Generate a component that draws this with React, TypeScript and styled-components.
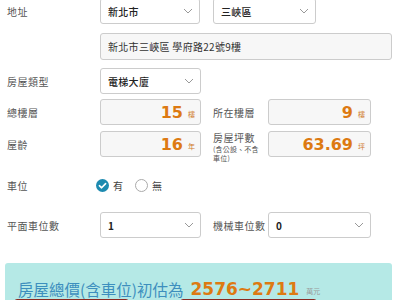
import React from "react";
import styled, { createGlobalStyle } from "styled-components";

const GlobalStyle = createGlobalStyle`
  html, body {
    margin: 0;
    background: #fff;
    font-family: "Noto Sans CJK TC", "Noto Sans", sans-serif;
    overflow: hidden;
  }
`;

const Chevron = () => (
  <svg width="10" height="6" viewBox="0 0 10 6">
    <path d="M1 1 L5 5 L9 1" fill="none" stroke="#999" strokeWidth="1" />
  </svg>
);

const Check = () => (
  <svg width="13" height="13" viewBox="0 0 13 13">
    <circle cx="6.5" cy="6.5" r="6.5" fill="#1d8ab0" />
    <path d="M3.4 6.7 L5.6 8.8 L9.6 4.6" fill="none" stroke="#fff" strokeWidth="1.6" strokeLinecap="round" strokeLinejoin="round" />
  </svg>
);

export default function App() {
  return (
    <>
      <GlobalStyle />
      <Page>
        <Row $mt={-2}>
          <Label>地址</Label>
          <Select $w={100}>
            新北市
            <Chevron />
          </Select>
          <Gap $w={13} />
          <Select $w={103}>
            三峽區
            <Chevron />
          </Select>
        </Row>
        <Row $mt={9}>
          <Label />
          <TextBox $w={292}>新北市三峽區 學府路22號9樓</TextBox>
        </Row>
        <Row $mt={9}>
          <Label>房屋類型</Label>
          <Select $w={101}>
            電梯大廈
            <Chevron />
          </Select>
        </Row>
        <Row $mt={5}>
          <Label>總樓層</Label>
          <ValueBox $w={101}>
            <Num>15</Num>
            <Unit>樓</Unit>
          </ValueBox>
          <SubLabel>所在樓層</SubLabel>
          <ValueBox $w={103}>
            <Num>9</Num>
            <Unit>樓</Unit>
          </ValueBox>
        </Row>
        <Row $mt={6}>
          <Label>屋齡</Label>
          <ValueBox $w={101}>
            <Num>16</Num>
            <Unit>年</Unit>
          </ValueBox>
          <SubLabel $top>
            房屋坪數
            <Note>(含公設、不含車位)</Note>
          </SubLabel>
          <ValueBox $w={103}>
            <Num>63.69</Num>
            <Unit>坪</Unit>
          </ValueBox>
        </Row>
        <Row $mt={18} $h={20}>
          <Label>車位</Label>
          <RadioGroup>
            <RadioItem>
              <Check />
              有
            </RadioItem>
            <RadioItem>
              <EmptyRadio />
              無
            </RadioItem>
          </RadioGroup>
        </Row>
        <Row $mt={17}>
          <Label>平面車位數</Label>
          <Select $w={101} $dark>
            1
            <Chevron />
          </Select>
          <SubLabel>機械車位數</SubLabel>
          <Select $w={103} $dark>
            0
            <Chevron />
          </Select>
        </Row>
        <Panel>
          <Estimate>
            房屋總價(含車位)初估為
            <Price>2576~2711</Price>
            <PriceUnit>萬元</PriceUnit>
          </Estimate>
          <Tabs>
            <Tab $w={113} />
            <Tab $w={135} />
          </Tabs>
        </Panel>
      </Page>
    </>
  );
}

const Page = styled.div`
  width: 400px;
  padding-left: 7px;
  box-sizing: border-box;
`;

const Row = styled.div<{ $mt: number; $h?: number }>`
  display: flex;
  align-items: center;
  margin-top: ${({ $mt }) => $mt}px;
  height: ${({ $h }) => ($h ? `${$h}px` : "26px")};
`;

const Label = styled.div`
  width: 93px;
  flex: none;
  font-size: 10px;
  letter-spacing: 0.5px;
  color: #555;
`;

const Gap = styled.div<{ $w: number }>`
  width: ${({ $w }) => $w}px;
  flex: none;
`;

const SubLabel = styled.div<{ $top?: boolean }>`
  width: 55px;
  margin-left: 12px;
  flex: none;
  align-self: ${({ $top }) => ($top ? "flex-start" : "center")};
  font-size: 10px;
  letter-spacing: 0.5px;
  line-height: 13px;
  color: #555;
`;

const Note = styled.div`
  width: 50px;
  font-size: 7px;
  letter-spacing: 0.2px;
  line-height: 9px;
  color: #555;
  margin-top: 1px;
`;

const Select = styled.div<{ $w: number; $dark?: boolean }>`
  width: ${({ $w }) => $w}px;
  height: 26px;
  box-sizing: border-box;
  flex: none;
  display: flex;
  align-items: center;
  justify-content: space-between;
  padding: 0 6px 0 7px;
  border: 1px solid #ccc;
  border-radius: 3px;
  background: #fff;
  font-size: 10px;
  font-weight: ${({ $dark }) => ($dark ? 700 : 500)};
  letter-spacing: 0.3px;
  color: #222;
`;

const TextBox = styled.div<{ $w: number }>`
  width: ${({ $w }) => $w}px;
  height: 27px;
  box-sizing: border-box;
  display: flex;
  align-items: center;
  padding-left: 7px;
  border: 1px solid #ccc;
  border-radius: 3px;
  background: #f7f7f7;
  font-size: 10px;
  letter-spacing: 0.3px;
  color: #333;
`;

const ValueBox = styled.div<{ $w: number }>`
  width: ${({ $w }) => $w}px;
  height: 26px;
  box-sizing: border-box;
  flex: none;
  display: flex;
  align-items: center;
  justify-content: flex-end;
  gap: 5px;
  padding-right: 5px;
  border: 1px solid #ccc;
  border-radius: 3px;
  background: #f7f7f7;
`;

const Num = styled.span`
  font-family: "DejaVu Sans", sans-serif;
  font-weight: 700;
  font-size: 16px;
  color: #dd7a12;
`;

const Unit = styled.span`
  font-size: 7px;
  color: #cf7a2a;
  margin-top: 3px;
`;

const RadioGroup = styled.div`
  display: flex;
  align-items: center;
  gap: 12px;
  margin-left: -4px;
`;

const RadioItem = styled.label`
  display: flex;
  align-items: center;
  gap: 4px;
  font-size: 10px;
  color: #444;
`;

const EmptyRadio = styled.span`
  width: 11px;
  height: 11px;
  border: 1px solid #aaa;
  border-radius: 50%;
  background: #fff;
`;

const Panel = styled.div`
  margin-top: 25px;
  margin-left: -2px;
  width: 387px;
  height: 60px;
  box-sizing: border-box;
  background: #b5e9e6;
  border-radius: 3px;
  padding: 19px 0 0 13px;
`;

const Estimate = styled.div`
  display: flex;
  align-items: center;
  height: 15px;
  font-size: 15.5px;
  color: #3d8fbe;
  line-height: 15px;
`;

const Price = styled.span`
  font-family: "DejaVu Sans", sans-serif;
  font-weight: 700;
  font-size: 17px;
  color: #dd7a12;
  margin-left: 7px;
`;

const PriceUnit = styled.span`
  font-size: 7px;
  color: #999;
  margin-left: 7px;
  margin-top: 3px;
`;

const Tabs = styled.div`
  display: flex;
  gap: 51px;
  margin-top: 2px;
  margin-left: -4px;
`;

const Tab = styled.div<{ $w: number }>`
  width: ${({ $w }) => $w}px;
  height: 10px;
  border: 1px solid #8a2a22;
  border-radius: 3px 3px 0 0;
  background: #fff;
`;
